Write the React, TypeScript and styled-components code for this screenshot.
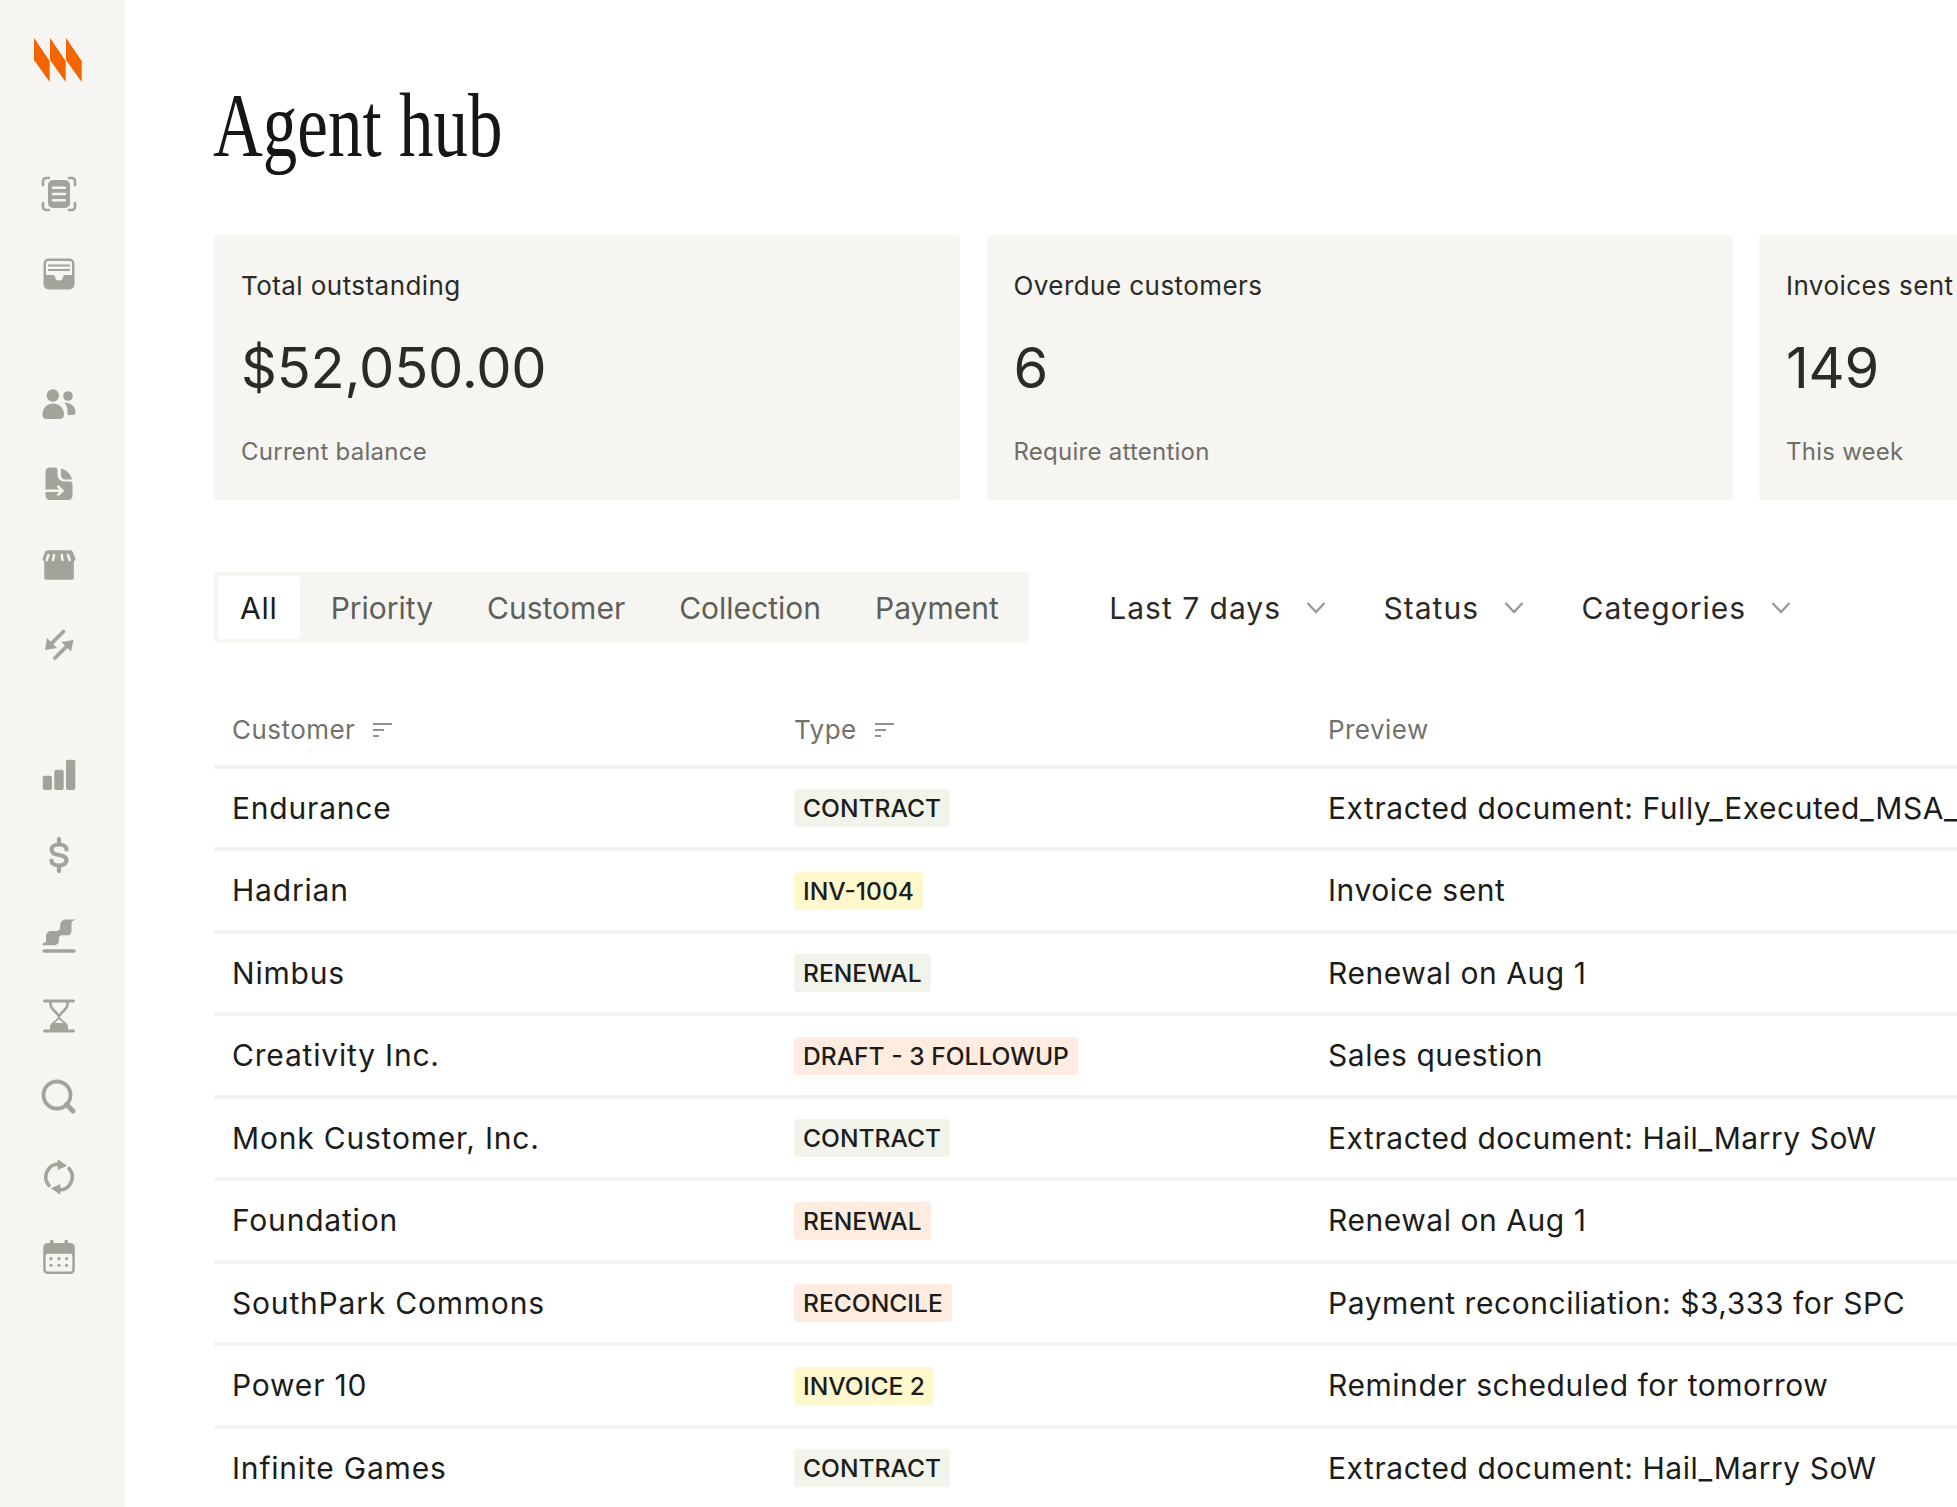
import React from 'react';
import styled, { createGlobalStyle } from 'styled-components';

const GlobalStyle = createGlobalStyle`
  html, body {
    margin: 0;
    padding: 0;
    background: #fff;
    overflow: hidden;
  }
  * { box-sizing: border-box; }
`;

const Page = styled.div`
  display: flex;
  width: 1957px;
  height: 1507px;
  overflow: hidden;
  font-family: Inter, "Liberation Sans", sans-serif;
  color: #1c1c1a;
`;

const Sidebar = styled.nav`
  flex: 0 0 125px;
  display: flex;
  flex-direction: column;
  align-items: center;
  background: #f6f5f1;
  padding: 38px 8px 0 0;
`;

const Logo = styled.svg`
  width: 48px;
  height: 44px;
  margin-bottom: 93.5px;
  margin-left: -2px;
`;

const NavGroup = styled.div`
  display: flex;
  flex-direction: column;
  gap: 44.5px;
  margin-bottom: 93.5px;
`;

const NavIcon = styled.svg`
  display: block;
  width: 36px;
  height: 36px;
  color: #a3a39c;
`;

const Main = styled.main`
  flex: 1;
  min-width: 0;
  padding-left: 89px;
`;

const Title = styled.h1`
  margin: 0 0 0 -1px;
  padding-top: 75px;
  height: 235px;
  font-family: "Liberation Serif", serif;
  font-weight: 400;
  font-size: 92px;
  line-height: 100px;
  color: #161615;
  transform: scaleX(0.75);
  transform-origin: left top;
`;

const Cards = styled.div`
  display: flex;
  gap: 26.5px;
`;

const Card = styled.section`
  flex: 0 0 746px;
  height: 265px;
  padding: 32px 27px 0;
  background: #f6f5f1;
  border-radius: 4px;
`;

const CardLabel = styled.div`
  font-size: 26px;
  line-height: 38px;
  letter-spacing: 0.44px;
  color: #2a2a28;
`;

const CardValue = styled.div`
  margin-top: 29px;
  font-size: 56px;
  line-height: 68px;
  letter-spacing: -0.2px;
  color: #2a2a28;
`;

const CardNote = styled.div`
  margin-top: 32px;
  font-size: 24px;
  line-height: 36px;
  letter-spacing: 0.25px;
  color: #6e6e69;
`;

const FilterBar = styled.div`
  display: flex;
  align-items: center;
  margin-top: 72px;
`;

const Tabs = styled.div`
  display: flex;
  align-items: center;
  height: 71px;
  padding: 4px 3.5px 4px 4px;
  background: #f6f5f1;
  border-radius: 4px;
`;

const Tab = styled.div<{ $active?: boolean }>`
  height: 63px;
  line-height: 65px;
  padding: 0 ${({ $active }) => ($active ? '22px' : '27px')};
  margin-right: ${({ $active }) => ($active ? '4px' : '0')};
  font-size: 30px;
  letter-spacing: ${({ $active }) => ($active ? '0.8px' : '0')};
  border-radius: 4px;
  background: ${({ $active }) => ($active ? '#fff' : 'transparent')};
  color: ${({ $active }) => ($active ? '#1c1c1a' : '#5f5f5a')};
`;

const Dropdowns = styled.div`
  display: flex;
  align-items: center;
  gap: 57.5px;
  margin-left: 80px;
`;

const Dropdown = styled.div`
  display: flex;
  align-items: center;
  gap: 25px;
  font-size: 30px;
  letter-spacing: 1px;
  color: #2a2a28;
`;

const Chevron = styled.svg`
  width: 20px;
  height: 20px;
  color: #9a9a94;
`;

const Table = styled.div`
  margin-top: 45.5px;
  white-space: nowrap;
`;

const Row = styled.div<{ $head?: boolean }>`
  display: grid;
  grid-template-columns: 562px 534px 1fr;
  align-items: center;
  height: ${({ $head }) => ($head ? '80px' : '82.5px')};
  padding: ${({ $head }) => ($head ? '6px 0 0 18px' : '0 0 0 18px')};
  border-bottom: 4px solid #f2f2f0;
`;

const HeadCell = styled.div`
  display: flex;
  align-items: center;
  gap: 18px;
  font-size: 26px;
  letter-spacing: 0.45px;
  color: #72726d;
`;

const SortIcon = styled.svg`
  width: 19px;
  height: 16px;
  color: #72726d;
`;

const Cell = styled.div<{ $spacing: number }>`
  font-size: 30px;
  letter-spacing: ${({ $spacing }) => $spacing}px;
  color: #1c1c1a;
`;

const tagColours = {
  neutral: '#f2f3ea',
  orange: '#ffece1',
  yellow: '#fef8cc',
};

const Tag = styled.span<{ $tone: keyof typeof tagColours }>`
  display: inline-block;
  height: 38px;
  line-height: 39px;
  padding: 0 9px;
  font-size: 24.6px;
  font-weight: 500;
  letter-spacing: 0;
  border-radius: 4px;
  background: ${({ $tone }) => tagColours[$tone]};
  color: #1c1c1a;
`;

const light = '#f6f5f1';

const navGroups = [
  [
    <>
      <path d="M2 9V5a3 3 0 0 1 3-3h3M28 2h3a3 3 0 0 1 3 3v4M34 27v4a3 3 0 0 1-3 3h-3M8 34H5a3 3 0 0 1-3-3v-4" fill="none" stroke="currentColor" strokeWidth="2.6" strokeLinecap="round" />
      <rect x="7" y="4" width="22" height="28" rx="5" fill="currentColor" />
      <path d="M12 11.7h12M12 18h12M12 24.3h12" stroke={light} strokeWidth="2.4" strokeLinecap="round" />
    </>,
    <>
      <rect x="2.5" y="2.5" width="31" height="31" rx="5" fill="currentColor" />
      <path d="M5 7a2 2 0 0 1 2-2h22a2 2 0 0 1 2 2v12h-7c-1 0-1.5.5-2 1.5a4 4 0 0 1-8 0c-.5-1-1-1.5-2-1.5H5z" fill={light} />
      <path d="M7 9.5h22M7 14h22" stroke="currentColor" strokeWidth="2" />
    </>,
  ],
  [
    <>
      <circle cx="11.8" cy="9.5" r="6.2" fill="currentColor" />
      <circle cx="27" cy="10" r="4.8" fill="currentColor" />
      <path d="M1.5 28.5c0-6 4-11 10.5-11s11 5 11 11c0 3-2 4.5-4.5 4.5H5.5c-2.5 0-4-1.5-4-4.5z" fill="currentColor" />
      <path d="M23.5 16.5c6 0 11 4 11 9.5 0 2-1 3-3 3h-5c.5-5-.5-9-3-12.5z" fill="currentColor" />
    </>,
    <>
      <path d="M8.5 1.5H14c1.5 0 2.5 1 2.5 2.5v5c0 3.5 3 6.5 6.5 6.5h6c1.5 0 2.5 1 2.5 2.5V30c0 2.2-1.8 4-4 4H8.5c-2.2 0-4-1.8-4-4V5.5c0-2.2 1.8-4 4-4z" fill="currentColor" />
      <path d="M20 2.5c5 1 10 6 11 11h-7c-2.2 0-4-1.8-4-4z" fill="currentColor" />
      <path d="M3 24.7h18M16.5 20l5 4.7-5 4.7" fill="none" stroke={light} strokeWidth="2.5" />
    </>,
    <>
      <path d="M7 3.3h22c1.5 0 2.5.7 3 2l2.3 5.7c.5 1.3 0 2.4-1.5 3.3V31c0 1-.8 1.7-1.8 1.7H5c-1 0-1.8-.7-1.8-1.7V14.3C1.8 13.4 1.2 12.3 1.7 11L4 5.3c.5-1.3 1.5-2 3-2z" fill="currentColor" />
      <path d="M7.5 8 5.8 13M13 8l-1 5M20.8 8l.7 5M27 8l1.7 5" stroke={light} strokeWidth="2.4" strokeLinecap="round" />
    </>,
    <>
      <path d="M22.5 4.5 9 18M14 31l13-13" stroke="currentColor" strokeWidth="3.8" strokeLinecap="round" />
      <path d="M4 23 6 11l10 10zM32.5 13 30 24.5 20.5 15z" fill="currentColor" />
    </>,
  ],
  [
    <>
      <rect x="1.7" y="18.7" width="9.3" height="14.3" rx="2" fill="currentColor" />
      <rect x="13.3" y="12.7" width="9.4" height="20.3" rx="2" fill="currentColor" />
      <rect x="25" y="2.7" width="9.3" height="30.3" rx="2" fill="currentColor" />
    </>,
    <>
      <path d="M25.5 12.5c0-3-3-5-7.5-5s-7.5 2-7.5 5.2 3 4.6 7.5 5.3 7.5 2.2 7.5 5.3-3 5.2-7.5 5.2-7.5-2-7.5-5M18 2v5.5M18 28.5V34" fill="none" stroke="currentColor" strokeWidth="4.2" strokeLinecap="round" />
    </>,
    <>
      <path d="M34.3 1.5H25c-3.5 0-5.8 2.5-5.8 5.5v1.5c0 3-1.5 4.5-4 4.5h-4.5c-3.5 0-5.7 2-5.7 5.5v4c0 1.5-1 2.5-3.5 3v1.7h10.5c4 0 6-2 6-5v-2c0-2 1-3 3-3h5c3.5 0 4.5-2 4.5-5V5.5c0-2 1.2-3 3.3-3.5z" fill="currentColor" />
      <path d="M3.2 33h29.8" stroke="currentColor" strokeWidth="3.4" strokeLinecap="round" />
    </>,
    <>
      <path d="M3.5 3h29M3.5 33h29" stroke="currentColor" strokeWidth="2.8" strokeLinecap="round" />
      <path d="M9.5 4v2c0 4 3 6 5.5 8.5l3 3.5 3-3.5C23.5 12 26.5 10 26.5 6V4" fill="none" stroke="currentColor" strokeWidth="2.6" />
      <path d="M18 18.5l3.5 3.5c3 2.5 5.5 4 5.5 7v3H9v-3c0-3 2.5-4.5 5.5-7z" fill="currentColor" />
      <path d="M13.5 25 18 21.2l4.5 3.8z" fill={light} />
    </>,
    <>
      <circle cx="16" cy="16" r="13.5" fill="none" stroke="currentColor" strokeWidth="3.8" />
      <path d="M25.5 25.5 32 32" stroke="currentColor" strokeWidth="5" strokeLinecap="round" />
    </>,
    <>
      <path d="M8 26.5A13 13 0 0 1 18 5M28 9.5A13 13 0 0 1 18 31" fill="none" stroke="currentColor" strokeWidth="3.6" strokeLinecap="round" />
      <path d="M16.6.3 26.2 6.7 16.6 11zM19.4 35.7 9.8 29.3 19.4 25z" fill="currentColor" />
    </>,
    <>
      <rect x="2.2" y="3" width="31.6" height="31" rx="4.5" fill="currentColor" />
      <rect x="4.7" y="13.7" width="26.6" height="17.8" rx="2" fill={light} />
      <path d="M10.8 1.5V5M25.2 1.5V5" stroke="currentColor" strokeWidth="3.5" strokeLinecap="round" />
      {[10, 18, 25.6].map(x =>
        [18.7, 25.3].map(y => <circle key={`${x}-${y}`} cx={x} cy={y} r="1.6" fill="currentColor" />)
      )}
    </>,
  ],
];

const stats = [
  { label: 'Total outstanding', value: '$52,050.00', note: 'Current balance' },
  { label: 'Overdue customers', value: '6', note: 'Require attention' },
  { label: 'Invoices sent', value: '149', note: 'This week' },
];

const tabs = ['All', 'Priority', 'Customer', 'Collection', 'Payment'];
const filters = ['Last 7 days', 'Status', 'Categories'];

const rows: { customer: string; tag: string; tone: keyof typeof tagColours; preview: string }[] = [
  { customer: 'Endurance', tag: 'CONTRACT', tone: 'neutral', preview: 'Extracted document: Fully_Executed_MSA_2024.pdf' },
  { customer: 'Hadrian', tag: 'INV-1004', tone: 'yellow', preview: 'Invoice sent' },
  { customer: 'Nimbus', tag: 'RENEWAL', tone: 'neutral', preview: 'Renewal on Aug 1' },
  { customer: 'Creativity Inc.', tag: 'DRAFT - 3 FOLLOWUP', tone: 'orange', preview: 'Sales question' },
  { customer: 'Monk Customer, Inc.', tag: 'CONTRACT', tone: 'neutral', preview: 'Extracted document: Hail_Marry SoW' },
  { customer: 'Foundation', tag: 'RENEWAL', tone: 'orange', preview: 'Renewal on Aug 1' },
  { customer: 'SouthPark Commons', tag: 'RECONCILE', tone: 'orange', preview: 'Payment reconciliation: $3,333 for SPC' },
  { customer: 'Power 10', tag: 'INVOICE 2', tone: 'yellow', preview: 'Reminder scheduled for tomorrow' },
  { customer: 'Infinite Games', tag: 'CONTRACT', tone: 'neutral', preview: 'Extracted document: Hail_Marry SoW' },
];

const Sort = () => (
  <SortIcon viewBox="0 0 19 16">
    <path d="M0 2h19M0 8h11M0 14h6" stroke="currentColor" strokeWidth="1.6" />
  </SortIcon>
);

export default function App() {
  return (
    <Page>
      <GlobalStyle />
      <Sidebar>
        <Logo viewBox="0 0 48 44">
          <path d="M0 0 15.7 23V44L0 22z" fill="#f46400" />
          <path d="M16 0 31.7 23V44L16 22z" fill="#f46400" />
          <path d="M32 0 47.7 23V44L32 22z" fill="#f46400" />
        </Logo>
        {navGroups.map((group, g) => (
          <NavGroup key={g}>
            {group.map((icon, i) => (
              <NavIcon key={i} viewBox="0 0 36 36">{icon}</NavIcon>
            ))}
          </NavGroup>
        ))}
      </Sidebar>
      <Main>
        <Title>Agent hub</Title>
        <Cards>
          {stats.map(stat => (
            <Card key={stat.label}>
              <CardLabel>{stat.label}</CardLabel>
              <CardValue>{stat.value}</CardValue>
              <CardNote>{stat.note}</CardNote>
            </Card>
          ))}
        </Cards>
        <FilterBar>
          <Tabs>
            {tabs.map((tab, i) => (
              <Tab key={tab} $active={i === 0}>{tab}</Tab>
            ))}
          </Tabs>
          <Dropdowns>
            {filters.map(filter => (
              <Dropdown key={filter}>
                {filter}
                <Chevron viewBox="0 0 20 20">
                  <path d="M1.5 5 10 14l8.5-9" fill="none" stroke="currentColor" strokeWidth="2.4" />
                </Chevron>
              </Dropdown>
            ))}
          </Dropdowns>
        </FilterBar>
        <Table>
          <Row $head>
            <HeadCell>Customer <Sort /></HeadCell>
            <HeadCell>Type <Sort /></HeadCell>
            <HeadCell>Preview</HeadCell>
          </Row>
          {rows.map(row => (
            <Row key={row.customer}>
              <Cell $spacing={0.8}>{row.customer}</Cell>
              <Cell $spacing={0}><Tag $tone={row.tone}>{row.tag}</Tag></Cell>
              <Cell $spacing={0.55}>{row.preview}</Cell>
            </Row>
          ))}
        </Table>
      </Main>
    </Page>
  );
}
